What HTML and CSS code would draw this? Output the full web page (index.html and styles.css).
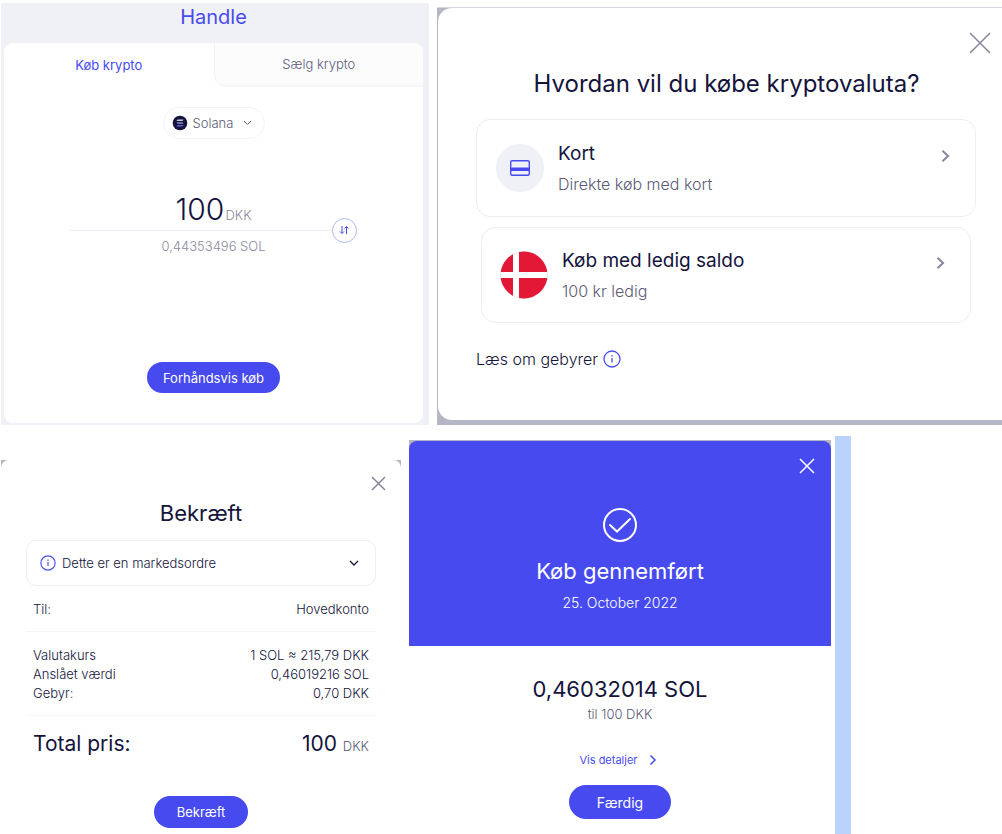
FILE: index.html
```html
<!DOCTYPE html>
<html lang="da">
<head>
    <meta charset="UTF-8">
    <meta name="viewport" content="width=device-width, initial-scale=1">
    <title>Handle</title>
    <link rel="stylesheet" href="styles.css">
</head>
<body>
    <div class="row row-top">
        <section class="trade">
            <h1>Handle</h1>
            <div class="trade-card">
                <div class="tabs">
                    <button type="button" class="tab active">Køb krypto</button>
                    <button type="button" class="tab">Sælg krypto</button>
                </div>
                <label class="coin">
                    <svg width="16" height="16" viewBox="0 0 16 16">
                        <circle cx="8" cy="8" r="7.3" fill="#14143c"/>
                        <path d="M5.5 4.5h6l-1 1.5h-6z" fill="#c9c9e0"/>
                        <path d="M4.5 7.2h6l1 1.5h-6z" fill="#8f8fce"/>
                        <path d="M5.5 9.9h6l-1 1.5h-6z" fill="#6a5fe0"/>
                    </svg>
                    <select aria-label="Kryptovaluta">
                        <option>Solana</option>
                    </select>
                    <svg class="chevron" width="9" height="6" viewBox="0 0 9 6"><path d="M1 1l3.5 3.5L8 1"/></svg>
                </label>
                <div class="amount">
                    <input id="amount" type="text" value="100" aria-label="Beløb">
                    <label for="amount">DKK</label>
                </div>
                <div class="divider">
                    <button type="button" class="swap" aria-label="Byt valuta">
                        <svg width="11" height="10" viewBox="0 0 11 10"><path d="M3 1v7.5M1 6.5l2 2 2-2M7.5 9V1.5M5.5 3.5l2-2 2 2"/></svg>
                    </button>
                </div>
                <p class="converted">0,44353496 SOL</p>
                <button type="button" class="primary">Forhåndsvis køb</button>
            </div>
        </section>

        <section class="method">
            <div class="method-dialog">
                <button type="button" class="close" aria-label="Luk">
                    <svg width="22" height="22" viewBox="0 0 22 22"><path d="M1 1l20 20M21 1L1 21"/></svg>
                </button>
                <h2>Hvordan vil du købe kryptovaluta?</h2>
                <button type="button" class="option">
                    <span class="option-icon">
                        <svg width="22" height="18" viewBox="0 0 22 18">
                            <rect x="1.7" y="1.7" width="18.6" height="14.6" rx="1.5" fill="none" stroke="#474bef" stroke-width="1.4"/>
                            <path d="M1.5 8.5h19V12h-19z" fill="#474bef"/>
                        </svg>
                    </span>
                    <span class="option-text">
                        <span class="option-title">Kort</span>
                        <span class="option-sub">Direkte køb med kort</span>
                    </span>
                    <svg class="arrow" width="9" height="14" viewBox="0 0 9 14"><path d="M1.5 1.8L7 7l-5.5 5.2"/></svg>
                </button>
                <button type="button" class="option option-balance">
                    <svg class="flag" width="48" height="48" viewBox="0 0 48 48">
                        <circle cx="24" cy="24" r="23.5" fill="#fff" stroke="#dcdce4" stroke-width=".6"/>
                        <clipPath id="round"><circle cx="24" cy="24" r="23.5"/></clipPath>
                        <path d="M0 0h13v21H0zM19 0h29v21H19zM0 27h13v21H0zM19 27h29v21H19z" fill="#e31836" clip-path="url(#round)"/>
                    </svg>
                    <span class="option-text">
                        <span class="option-title">Køb med ledig saldo</span>
                        <span class="option-sub">100 kr ledig</span>
                    </span>
                    <svg class="arrow" width="9" height="14" viewBox="0 0 9 14"><path d="M1.5 1.8L7 7l-5.5 5.2"/></svg>
                </button>
                <a class="fees" href="#">
                    Læs om gebyrer
                    <svg class="info" width="18" height="18" viewBox="0 0 18 18"><circle cx="9" cy="9" r="8"/><path d="M9 8v4.5M9 5v1.5"/></svg>
                </a>
            </div>
        </section>
    </div>

    <div class="row row-bottom">
        <section class="confirm">
            <div class="confirm-dialog">
                <button type="button" class="close" aria-label="Luk">
                    <svg width="15" height="15" viewBox="0 0 15 15"><path d="M1 1l13 13M14 1L1 14"/></svg>
                </button>
                <h2>Bekræft</h2>
                <button type="button" class="notice" aria-expanded="false">
                    <svg class="info" width="16" height="16" viewBox="0 0 18 18"><circle cx="9" cy="9" r="8"/><path d="M9 8v4.5M9 5v1.5"/></svg>
                    <span>Dette er en markedsordre</span>
                    <svg class="chevron" width="10" height="6" viewBox="0 0 10 6"><path d="M1 1l4 4 4-4"/></svg>
                </button>
                <table>
                    <tbody>
                        <tr><th>Til:</th><td>Hovedkonto</td></tr>
                    </tbody>
                    <tbody>
                        <tr><th>Valutakurs</th><td>1 SOL ≈ 215,79 DKK</td></tr>
                        <tr><th>Anslået værdi</th><td>0,46019216 SOL</td></tr>
                        <tr><th>Gebyr:</th><td>0,70 DKK</td></tr>
                    </tbody>
                    <tbody class="total">
                        <tr><th>Total pris:</th><td>100 <small>DKK</small></td></tr>
                    </tbody>
                </table>
                <button type="button" class="primary">Bekræft</button>
            </div>
        </section>

        <section class="receipt">
            <div class="receipt-head">
                <button type="button" class="close" aria-label="Luk">
                    <svg width="16" height="16" viewBox="0 0 16 16"><path d="M1 1l14 14M15 1L1 15"/></svg>
                </button>
                <svg class="check" width="36" height="36" viewBox="0 0 36 36"><circle cx="18" cy="18" r="16"/><path d="M8 18l7 6.5L28 12"/></svg>
                <h2>Køb gennemført</h2>
                <p>25. October 2022</p>
            </div>
            <div class="receipt-body">
                <p class="received">0,46032014 SOL</p>
                <p class="paid">til 100 DKK</p>
                <a class="details" href="#">
                    Vis detaljer
                    <svg width="8" height="12" viewBox="0 0 8 12"><path d="M1.5 1.5L6 6l-4.5 4.5"/></svg>
                </a>
                <button type="button" class="primary">Færdig</button>
            </div>
        </section>

        <div class="strip"></div>
    </div>
</body>
</html>
```
FILE: styles.css
```css
* {
    box-sizing: border-box;
}

body {
    margin: 0;
    background: #fff;
    color: #14143c;
    font-family: Inter, "Liberation Sans", sans-serif;
    font-size: 13px;
    font-weight: 300;
}

h1, h2, p {
    margin: 0;
    font-weight: 400;
}

button, input, select {
    font: inherit;
    color: inherit;
    background: none;
    border: none;
    padding: 0;
    margin: 0;
}

button {
    cursor: pointer;
}

a {
    text-decoration: none;
}

svg {
    display: block;
    flex: none;
}

.row {
    display: grid;
    padding-left: 1px;
}

.row-top {
    grid-template-columns: 428fr 565fr;
    column-gap: 8px;
}

.row-bottom {
    grid-template-columns: 400fr 8px 422fr 4px 16px 151fr;
    margin-top: 11px;
}

.primary {
    display: block;
    margin: 0 auto;
    border-radius: 17px;
    background: #474bef;
    color: #fff;
    font-weight: 400;
}

.close {
    display: block;
    margin-left: auto;
}

.close path,
.chevron path,
.arrow path,
.swap path,
.details path {
    fill: none;
    stroke: currentColor;
}

.close path {
    stroke-width: 1.5;
}

.info {
    fill: none;
    stroke: #474bef;
    stroke-width: 1.3;
}

/* buy / sell */
.trade {
    margin-top: 3px;
    padding: 0 6px 2px 3px;
    background: #f0f1f7;
}

.trade h1 {
    color: #474bef;
    font-size: 20px;
    line-height: 28px;
    text-align: center;
}

.trade-card {
    margin-top: 12px;
    padding-bottom: 30px;
    border-radius: 9px;
    background: #fff;
    overflow: hidden;
}

.tabs {
    display: grid;
    grid-template-columns: 1fr 1fr;
    height: 44px;
}

.tab {
    color: #5a5a78;
    background: #fcfcfd;
    border-left: 1px solid #f3f3f7;
    border-bottom: 2px solid #f6f6f9;
    border-bottom-left-radius: 12px;
}

.tab.active {
    color: #474bef;
    background: #fff;
    border: none;
    font-weight: 400;
}

.coin {
    display: flex;
    align-items: center;
    gap: 5px;
    width: max-content;
    height: 32px;
    margin: 20px auto 0;
    padding: 0 12px 0 8px;
    border: 1px solid #f3f3f7;
    border-radius: 16px;
    color: #5a5a78;
}

.coin select {
    appearance: none;
    outline: none;
}

.coin .chevron {
    margin-left: 4px;
}

.amount {
    display: flex;
    align-items: baseline;
    justify-content: center;
    gap: 2px;
    margin-top: 50px;
    color: #8a8aa0;
}

.amount input {
    width: 48px;
    height: 40px;
    color: #14143c;
    font-size: 30px;
    text-align: right;
}

.divider {
    display: flex;
    align-items: center;
    height: 26px;
    margin: -12px 66px 0;
}

.divider::before {
    content: "";
    flex: 1;
    border-top: 1px solid #ebebf8;
}

.swap {
    display: grid;
    place-items: center;
    width: 25px;
    height: 25px;
    border: 1px solid #b5b7f8;
    border-radius: 50%;
    color: #474bef;
}

.converted {
    margin-top: -7px;
    color: #8a8aa0;
    line-height: 20px;
    font-weight: 300;
    text-align: center;
}

.trade .primary {
    margin-top: 106px;
    padding: 0 16px;
    height: 31px;
}

/* payment method */
.method {
    margin-top: 7px;
    padding: 1px 0 5px 1px;
    background: linear-gradient(#d6d7df 1px, #b4b6c5 1px);
}

.method-dialog {
    height: 100%;
    padding: 24px 11px 14px 38px;
    border-radius: 14px 0 0 14px;
    background: #fff;
}

.method .close,
.confirm .close {
    color: #85859d;
}

.method h2 {
    margin: 14px 14px 19px 0;
    font-size: 24px;
    line-height: 32px;
    text-align: center;
}

.option {
    display: flex;
    align-items: center;
    gap: 14px;
    width: calc(100% - 15px);
    height: 98px;
    padding: 0 25px 0 19px;
    border: 1px solid #ededf2;
    border-radius: 14px;
    text-align: left;
}

.option-balance {
    width: calc(100% - 25px);
    height: 96px;
    margin: 10px 0 0 5px;
    padding-left: 18px;
}

.option-icon {
    display: grid;
    place-items: center;
    width: 48px;
    height: 48px;
    border-radius: 50%;
    background: #f0f1f7;
}

.option-text {
    flex: 1;
}

.option-title,
.option-sub {
    display: block;
}

.option-title {
    font-size: 19px;
    font-weight: 400;
    line-height: 32px;
}

.option-sub {
    color: #5a5a78;
    font-size: 16px;
    line-height: 28px;
}

.arrow {
    margin-bottom: 24px;
    color: #85859d;
    stroke-width: 2;
}

.fees {
    display: inline-flex;
    align-items: center;
    gap: 5px;
    margin-top: 24px;
    color: #14143c;
    font-size: 16px;
    line-height: 24px;
}

/* confirm order */
.confirm {
    margin-top: 24px;
    background: linear-gradient(#b4b6c5 8px, #fff 8px);
}

.confirm-dialog {
    padding: 16px 25px 6px;
    border-radius: 8px 8px 0 0;
    background: #fff;
}

.confirm .close {
    margin-right: -10px;
}

.confirm h2 {
    margin-top: 7px;
    font-size: 22px;
    line-height: 30px;
    text-align: center;
}

.notice {
    display: flex;
    align-items: center;
    gap: 6px;
    width: 100%;
    height: 46px;
    margin-top: 12px;
    padding: 0 16px 0 13px;
    border: 1px solid #ededf2;
    border-radius: 10px;
}

.notice .chevron {
    margin-left: auto;
    stroke-width: 1.3;
}

.confirm table {
    width: 100%;
    border-collapse: collapse;
}

.confirm tbody + tbody {
    border-top: 1px solid #f5f5f8;
}

.confirm th,
.confirm td {
    padding: 0 7px;
    font-weight: 300;
    line-height: 19px;
    text-align: left;
    vertical-align: baseline;
}

.confirm td {
    text-align: right;
}

.confirm tr:first-child > * {
    padding-top: 14px;
}

.confirm tr:last-child > * {
    padding-bottom: 12px;
}

.confirm .total th,
.confirm .total td {
    padding-bottom: 38px;
    font-size: 21px;
    font-weight: 400;
    line-height: 28px;
}

.total small {
    color: #5a5a78;
    font-size: 13px;
    font-weight: 300;
    line-height: 1;
}

.confirm .primary {
    height: 32px;
    padding: 0 23px;
}

/* receipt */
.receipt {
    grid-column: 3;
    margin-top: 4px;
    background: linear-gradient(#b4b6c5 12px, #fff 12px);
}

.receipt-head {
    margin-top: 1px;
    padding: 17px 16px 33px;
    border-radius: 8px 8px 0 0;
    background: #474bef;
    color: #fff;
    text-align: center;
}

.check {
    margin: 33px auto 0;
    fill: none;
    stroke: #fff;
    stroke-width: 2;
    stroke-linecap: round;
}

.receipt h2 {
    margin-top: 13px;
    font-size: 22px;
    line-height: 30px;
}

.receipt-head p {
    margin-top: 7px;
    font-size: 14px;
    font-weight: 300;
    line-height: 20px;
}

.receipt-body {
    padding: 28px 15px 14px;
    text-align: center;
}

.received {
    font-size: 22px;
    line-height: 30px;
}

.paid {
    color: #5a5a78;
    font-weight: 300;
    line-height: 20px;
}

.details {
    display: flex;
    align-items: center;
    justify-content: center;
    gap: 11px;
    margin: 27px 0 16px;
    padding-right: 4px;
    color: #474bef;
    font-size: 11px;
    font-weight: 400;
    line-height: 18px;
}

.details path {
    stroke-width: 1.5;
}

.receipt .primary {
    height: 34px;
    padding: 0 28px;
    font-size: 14px;
}

.strip {
    grid-column: 5;
    background: #bad3fc;
}
```
